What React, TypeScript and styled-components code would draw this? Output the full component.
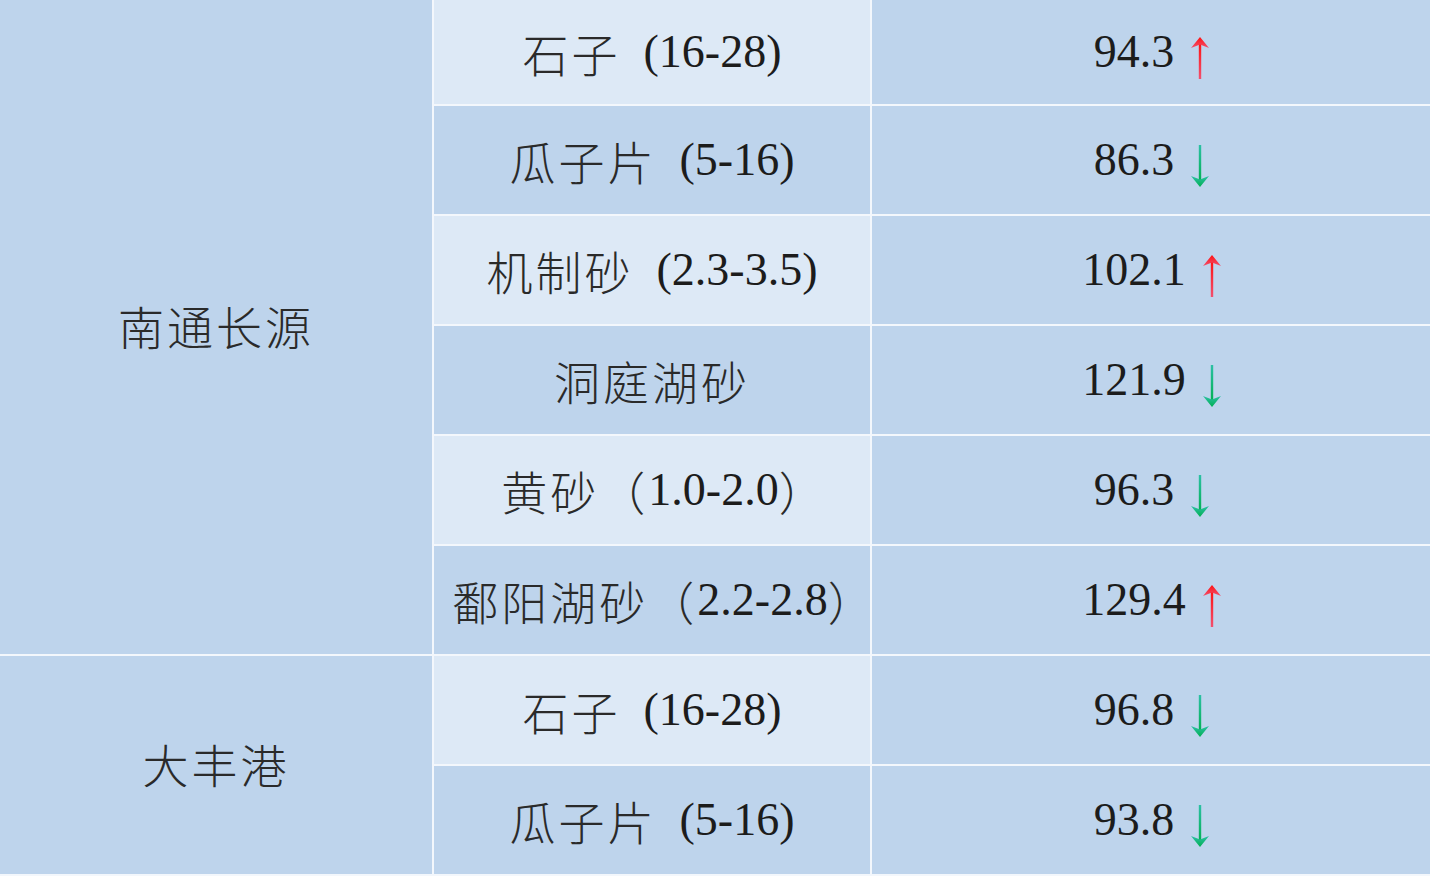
import { Fragment } from 'react';
import styled, { createGlobalStyle } from 'styled-components';

const GlobalStyle = createGlobalStyle`
  html, body {
    margin: 0;
    padding: 0;
    background: #f3f7fc;
  }
  body {
    font-family: 'Liberation Serif', 'Noto Sans CJK SC', serif;
    color: #1c1c1c;
  }
`;

type Trend = 'up' | 'down';

interface PriceRow {
  label: string;
  price: string;
  trend: Trend;
}

interface Origin {
  name: string;
  rows: PriceRow[];
}

const origins: Origin[] = [
  {
    name: '南通长源',
    rows: [
      { label: '石子\u2002(16-28)', price: '94.3', trend: 'up' },
      { label: '瓜子片\u2002(5-16)', price: '86.3', trend: 'down' },
      { label: '机制砂\u2002(2.3-3.5)', price: '102.1', trend: 'up' },
      { label: '洞庭湖砂', price: '121.9', trend: 'down' },
      { label: '黄砂（1.0-2.0）', price: '96.3', trend: 'down' },
      { label: '鄱阳湖砂（2.2-2.8）', price: '129.4', trend: 'up' },
    ],
  },
  {
    name: '大丰港',
    rows: [
      { label: '石子\u2002(16-28)', price: '96.8', trend: 'down' },
      { label: '瓜子片\u2002(5-16)', price: '93.8', trend: 'down' },
    ],
  },
];

const HAN = /[\u3000-\u303f\u4e00-\u9fff\uff00-\uffef]/;

// split label into CJK / latin runs so only the chinese gets the wide tracking
const splitRuns = (text: string) =>
  text.match(/[\u3000-\u303f\u4e00-\u9fff\uff00-\uffef]+|[^\u3000-\u303f\u4e00-\u9fff\uff00-\uffef]+/g) ?? [];

function Label({ text }: { text: string }) {
  return (
    <>
      {splitRuns(text).map((run, i) => {
        if (run === '）') return <Closing key={i}>{run}</Closing>;
        return HAN.test(run) ? <Han key={i}>{run}</Han> : <span key={i}>{run}</span>;
      })}
    </>
  );
}

export default function App() {
  let rowIndex = 0;

  return (
    <>
      <GlobalStyle />
      <Table>
        {origins.map((origin) => (
          <Fragment key={origin.name}>
            <OriginCell $span={origin.rows.length}>
              <Han>{origin.name}</Han>
            </OriginCell>
            {origin.rows.map((row) => {
              const light = rowIndex % 2 === 0;
              rowIndex += 1;
              return (
                <Fragment key={origin.name + row.label}>
                  <ProductCell $light={light}>
                    <Label text={row.label} />
                  </ProductCell>
                  <PriceCell>
                    <Price>{row.price}</Price>
                    <TrendArrow trend={row.trend} />
                  </PriceCell>
                </Fragment>
              );
            })}
          </Fragment>
        ))}
      </Table>
    </>
  );
}

function TrendArrow({ trend }: { trend: Trend }) {
  const id = `grad-${trend}`;
  const up = trend === 'up';
  return (
    <Arrow width="20" height="42" viewBox="0 0 20 42">
      <defs>
        <linearGradient id={id} x1="0" y1="0" x2="0" y2="1">
          <stop offset="0" stopColor={up ? '#ff1010' : '#2cc0a4'} />
          <stop offset="1" stopColor={up ? '#f2506e' : '#00b050'} />
        </linearGradient>
      </defs>
      {up ? (
        <>
          <rect x="8.8" y="5" width="2.4" height="37" fill={`url(#${id})`} />
          <path d="M10 0 L19 11 L10 7.5 L1 11 Z" fill={`url(#${id})`} />
        </>
      ) : (
        <>
          <rect x="8.8" y="0" width="2.4" height="37" fill={`url(#${id})`} />
          <path d="M10 42 L19 31 L10 34.5 L1 31 Z" fill={`url(#${id})`} />
        </>
      )}
    </Arrow>
  );
}

const Table = styled.div`
  display: grid;
  grid-template-columns: 432px 436px 1fr;
  grid-auto-rows: 108px;
  grid-template-rows: 104px;
  gap: 2px;
  width: 1430px;
  padding-bottom: 2px;
  background: #f3f7fc;
  font-size: 46px;
  line-height: 1;
`;

const Cell = styled.div`
  display: flex;
  align-items: center;
  justify-content: center;
  white-space: nowrap;
`;

const OriginCell = styled(Cell)<{ $span: number }>`
  grid-column: 1;
  grid-row: span ${(p) => p.$span};
  background: #bed4ec;
  padding-bottom: 4px;
`;

const ProductCell = styled(Cell)<{ $light: boolean }>`
  grid-column: 2;
  background: ${(p) => (p.$light ? '#dde9f6' : '#bed4ec')};
`;

const PriceCell = styled(Cell)`
  grid-column: 3;
  background: #bed4ec;
  padding-left: 2px;
`;

const Han = styled.span`
  font-family: 'Noto Sans CJK SC', sans-serif;
  font-weight: 300;
  letter-spacing: 3px;
  color: #2a2a2a;
`;

const Closing = styled(Han)`
  letter-spacing: 0;
  margin-right: -22px;
`;

const Price = styled.span`
  font-family: 'Liberation Serif', serif;
`;

const Arrow = styled.svg`
  display: block;
  margin-left: 16px;
  margin-top: 11px;
`;
